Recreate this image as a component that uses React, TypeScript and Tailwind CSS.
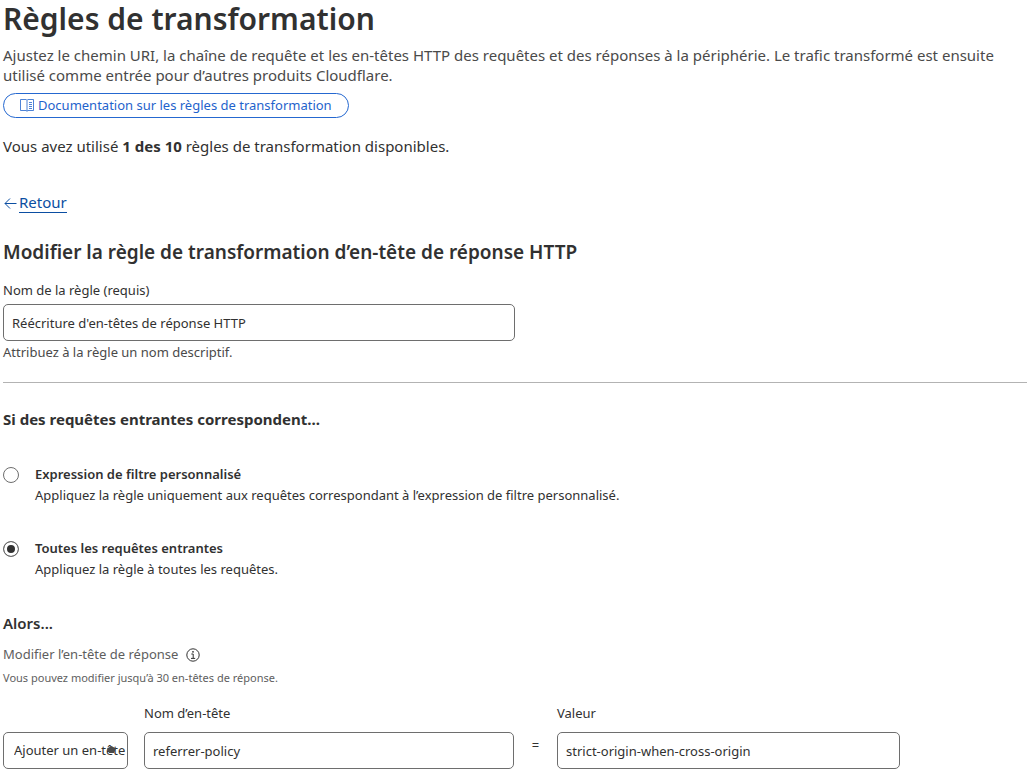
import { useState } from "react";

const inputClass =
  "block h-[37px] w-full rounded-[5px] border border-[#6e6e6e] bg-white px-2 text-[13px] text-[#313131] outline-none";

const BookIcon = () => (
  <svg width="14" height="13" viewBox="0 0 14 13" fill="none" stroke="currentColor" strokeWidth=".8" aria-hidden="true">
    <path d="M.5.5h5.500l1 .8 1-.8h5.500v11H8l-1 .8-1-.8H.5z" />
    <path d="M7 1.500v10.500M9 3.500h3M9 5.500h3M9 7.500h3M9 9.500h3" />
  </svg>
);

const ArrowIcon = () => (
  <svg width="14" height="14" viewBox="0 0 14 14" fill="none" stroke="currentColor" aria-hidden="true">
    <path d="M13.500 7.500H2M7 2.500l-5 5 5 5" />
  </svg>
);

const InfoIcon = () => (
  <svg width="14" height="14" viewBox="0 0 14 14" fill="none" stroke="currentColor" aria-hidden="true">
    <circle cx="7" cy="7" r="6.200" />
    <path d="M5.300 6h1.900v4.200M5 10.400h4.200" />
    <circle cx="7" cy="3.800" r=".9" fill="currentColor" stroke="none" />
  </svg>
);

const scopes = [
  {
    value: "custom",
    title: "Expression de filtre personnalisé",
    text: "Appliquez la règle uniquement aux requêtes correspondant à l’expression de filtre personnalisé.",
  },
  {
    value: "all",
    title: "Toutes les requêtes entrantes",
    text: "Appliquez la règle à toutes les requêtes.",
  },
];

const PageHeader = () => (
  <header>
    <h1 className="text-[30px] leading-[38px] font-semibold text-[#313131]">Règles de transformation</h1>
    <p className="mt-[7px] text-[15px] leading-5 text-[#4a4a4a]">
      Ajustez le chemin URI, la chaîne de requête et les en-têtes HTTP des requêtes et des réponses à la périphérie. Le
      trafic transformé est ensuite utilisé comme entrée pour d’autres produits Cloudflare.
    </p>
    <a
      href="#documentation"
      className="mt-2 flex h-[25px] w-fit items-center gap-1 rounded-full border border-[#2568d0] px-4 text-[13px] text-[#1f63cc]"
    >
      <BookIcon />
      Documentation sur les règles de transformation
    </a>
    <p className="mt-4 text-[15px] leading-6 text-[#313131]">
      Vous avez utilisé <strong>1 des 10</strong> règles de transformation disponibles.
    </p>
  </header>
);

const ScopeOptions = () => {
  const [scope, setScope] = useState("all");

  return (
    <fieldset>
      <legend className="text-[15px] leading-6 font-bold text-[#313131]">
        Si des requêtes entrantes correspondent...
      </legend>
      <div className="mt-[33px] flex flex-col gap-8">
        {scopes.map(({ value, title, text }) => (
          <label key={value} className="flex items-start gap-4 text-[13px] leading-[21px] text-[#313131]">
            <input
              type="radio"
              name="scope"
              value={value}
              checked={scope === value}
              onChange={() => setScope(value)}
              className="mt-[3px] h-4 w-4 shrink-0 appearance-none rounded-full border border-[#6e6e6e] bg-white checked:bg-[#313131] checked:shadow-[inset_0_0_0_3px_white]"
            />
            <span>
              <span className="block font-semibold">{title}</span>
              <span className="block">{text}</span>
            </span>
          </label>
        ))}
      </div>
    </fieldset>
  );
};

const HeaderRow = () => {
  const [name, setName] = useState("referrer-policy");
  const [value, setValue] = useState("strict-origin-when-cross-origin");

  return (
    <div className="mt-4 grid grid-cols-[125px_370fr_11px_343fr_111px] items-end gap-x-4 text-[13px] text-[#313131]">
      <div className="relative">
        <select
          aria-label="Action"
          className="block h-[37px] w-full appearance-none rounded-[5px] border border-[#6e6e6e] bg-white pl-[10px] text-[13px] outline-none"
        >
          <option>Ajouter un en-tête</option>
        </select>
        <svg className="pointer-events-none absolute top-[14px] right-3" width="9" height="8" viewBox="0 0 9 8" aria-hidden="true">
          <path d="M0 2.500L4.500 0 9 2.500 7 7H2z" fill="#4a4a4a" />
        </svg>
      </div>
      <div>
        <label htmlFor="header-name" className="mb-2 block leading-[21px]">Nom d’en-tête</label>
        <input id="header-name" className={inputClass} value={name} onChange={(e) => setName(e.target.value)} />
      </div>
      <span className="pb-3.5 text-center">=</span>
      <div>
        <label htmlFor="header-value" className="mb-2 block leading-[21px]">Valeur</label>
        <input id="header-value" className={inputClass} value={value} onChange={(e) => setValue(e.target.value)} />
      </div>
    </div>
  );
};

export default function App() {
  const [ruleName, setRuleName] = useState("Réécriture d'en-têtes de réponse HTTP");

  return (
    <main className="bg-white pr-[5px] pb-[7px] pl-[3px] font-['Segoe_UI','Noto_Sans',sans-serif]">
      <PageHeader />

      <a href="#retour" className="mt-[34px] flex w-fit items-center gap-0.5 text-[#0b4ea2]">
        <ArrowIcon />
        <span className="border-b border-current text-[15px] leading-5">Retour</span>
      </a>

      <h2 className="mt-6 text-[19px] leading-[30px] font-semibold text-[#313131]">
        Modifier la règle de transformation d’en-tête de réponse HTTP
      </h2>
      <div className="mt-[13px] w-1/2 text-[13px]">
        <label htmlFor="rule-name" className="mb-[3px] block leading-[21px] text-[#313131]">Nom de la règle (requis)</label>
        <input id="rule-name" className={inputClass} value={ruleName} onChange={(e) => setRuleName(e.target.value)} />
        <p className="mt-px leading-[21px] text-[#4a4a4a]">Attribuez à la règle un nom descriptif.</p>
      </div>

      <hr className="mt-[19px] mb-6 border-[#b3b3b3]" />

      <ScopeOptions />

      <h3 className="mt-[31px] text-[15px] leading-6 font-semibold text-[#313131]">Alors...</h3>
      <div className="mt-[9px] flex items-center gap-2 text-[13px] leading-[21px] text-[#5e5e5e]">
        Modifier l’en-tête de réponse
        <span className="text-[#313131]"><InfoIcon /></span>
      </div>
      <p className="mt-1 text-[11px] leading-[18px] text-[#5e5e5e]">Vous pouvez modifier jusqu’à 30 en-têtes de réponse.</p>
      <HeaderRow />
    </main>
  );
}
